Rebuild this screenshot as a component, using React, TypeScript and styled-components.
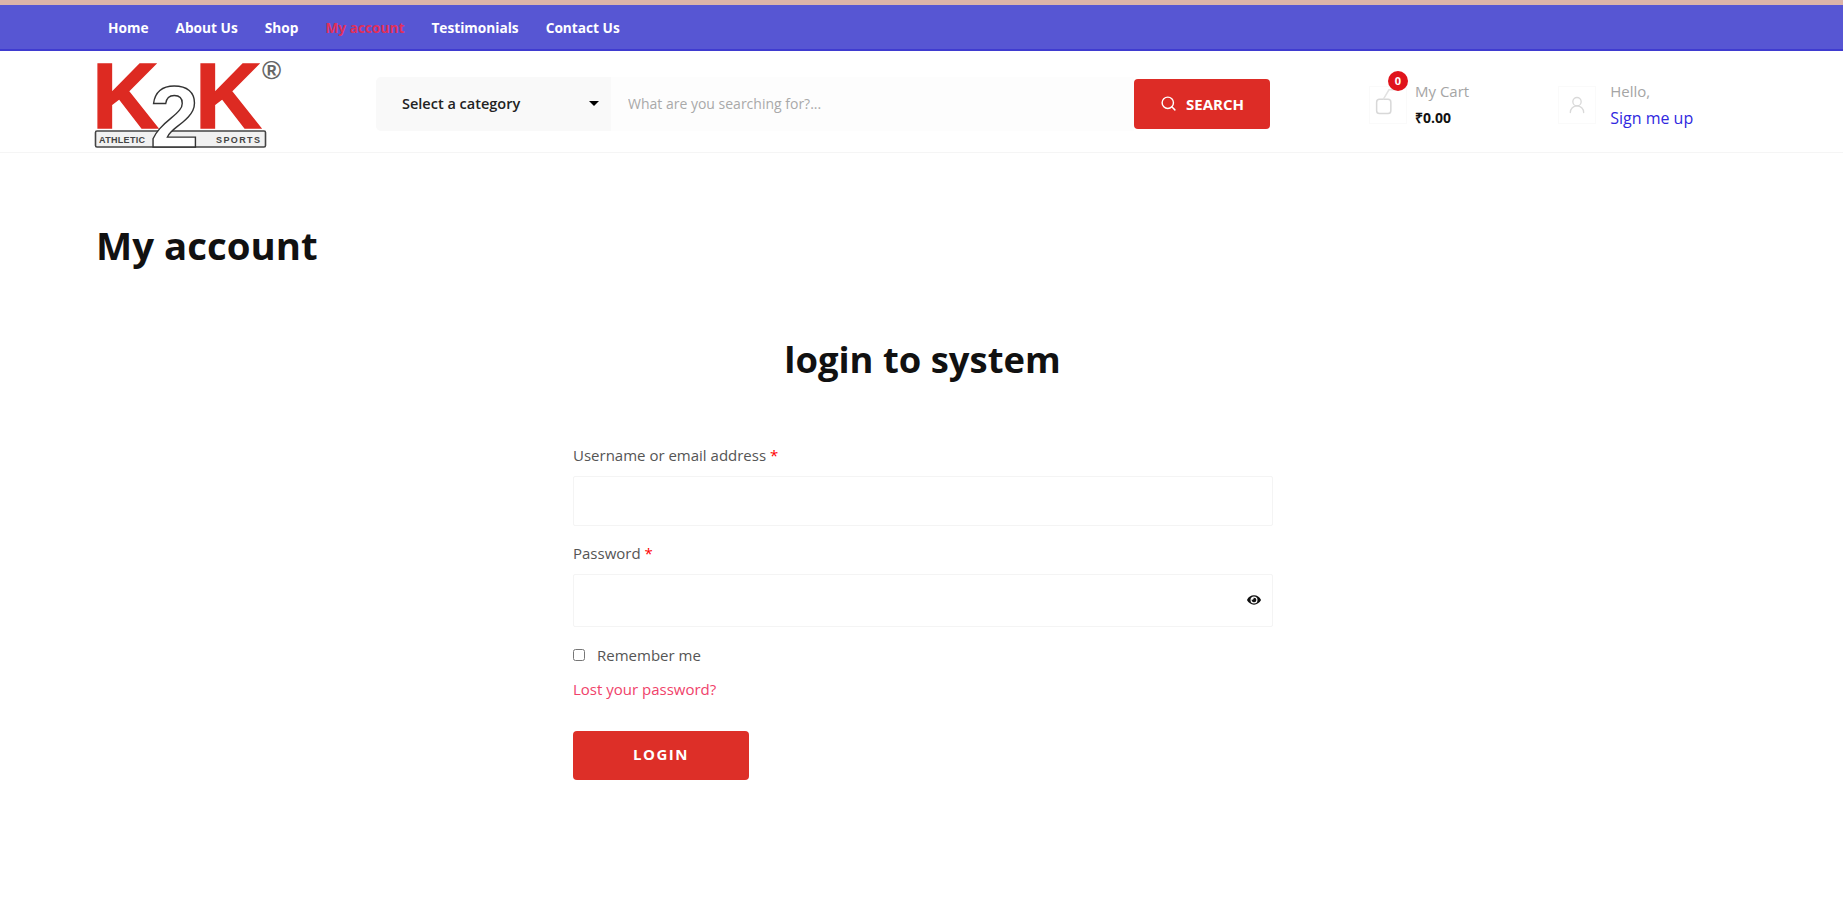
import React from "react";
import styled, { createGlobalStyle } from "styled-components";
import { Search, UserRound } from "lucide-react";
import { FaEye } from "react-icons/fa";

const Global = createGlobalStyle`
  html, body { margin: 0; padding: 0; background: #fff; }
  body { font-family: "Open Sans", "Liberation Sans", sans-serif; color: #111; }
  * { box-sizing: border-box; }
`;

const Page = styled.div`
  width: 1843px;
  height: 900px;
  overflow: hidden;
  display: flex;
  flex-direction: column;
`;
const Stripe = styled.div`
  height: 5px;
  background: #dcb4a9;
`;
const TopNav = styled.nav`
  height: 46px;
  background: #5756d3;
  border-bottom: 2px solid #3f3bd0;
  display: flex;
  align-items: center;
  gap: 27px;
  padding-left: 108px;
`;
const NavLink = styled.a<{ $active?: boolean }>`
  font-size: 13.7px;
  font-weight: 700;
  color: ${(p) => (p.$active ? "#e0305a" : "#fff")};
  white-space: nowrap;
`;
const Header = styled.header`
  height: 102px;
  border-bottom: 1px solid #f5f5f5;
  display: flex;
  align-items: center;
  padding-left: 90px;
`;
const LogoSvg = styled.svg`
  width: 200px;
  height: 98px;
  flex: none;
  margin-top: 4px;
  overflow: visible;
`;
const SearchBar = styled.div`
  margin: 4px 0 0 86px;
  width: 894px;
  height: 54px;
  display: flex;
  align-items: center;
`;
const Category = styled.div`
  width: 235px;
  height: 54px;
  background: #f9f9f9;
  border-radius: 5px 0 0 5px;
  display: flex;
  align-items: center;
  justify-content: space-between;
  padding: 0 12px 0 26px;
  font-size: 14.5px;
  font-weight: 600;
  color: #222;
`;
const Caret = styled.span`
  width: 0;
  height: 0;
  border-left: 5px solid transparent;
  border-right: 5px solid transparent;
  border-top: 5px solid #000;
`;
const SearchInput = styled.input`
  flex: 1;
  min-width: 0;
  height: 54px;
  border: 0;
  outline: 0;
  background: #fdfdfd;
  padding: 0 17px;
  font: 400 14px "Open Sans", sans-serif;
  &::placeholder { color: #a9a9a9; }
`;
const SearchButton = styled.button`
  width: 136px;
  height: 50px;
  border: 0;
  border-radius: 4px;
  background: #dd2c26;
  color: #fff;
  display: flex;
  align-items: center;
  justify-content: center;
  gap: 9px;
  font: 700 15px "Open Sans", sans-serif;
  padding: 0;
`;
const HeaderBlock = styled.div<{ $left: number }>`
  margin: 6px 0 0 ${(p) => p.$left}px;
  display: flex;
  align-items: center;
  flex: none;
`;
const IconBox = styled.div`
  position: relative;
  width: 38px;
  height: 38px;
  border: 1px solid #fafafa;
  display: flex;
  align-items: center;
  justify-content: center;
  color: #d9d9d9;
`;
const Badge = styled.span`
  position: absolute;
  top: -16px;
  left: 18px;
  width: 20px;
  height: 20px;
  border-radius: 50%;
  background: #e0141c;
  color: #fff;
  font-size: 11px;
  font-weight: 700;
  display: flex;
  align-items: center;
  justify-content: center;
`;
const InfoText = styled.div<{ $gap: number }>`
  display: flex;
  flex-direction: column;
  gap: 8px;
  margin: -2px 0 0 ${(p) => p.$gap}px;
`;
const InfoLabel = styled.span`
  color: #a5a5a5;
  font-size: 15px;
  line-height: 20px;
`;
const InfoValue = styled.span`
  color: #111;
  font-weight: 700;
  font-size: 14px;
  line-height: 18px;
`;
const InfoLink = styled.a`
  color: #3028e0;
  font-size: 16px;
  line-height: 18px;
`;
const Main = styled.main`
  display: flex;
  flex-direction: column;
`;
const PageTitle = styled.h1`
  margin: 67px 0 0 96px;
  font-size: 38.4px;
  line-height: 50px;
  font-weight: 700;
  color: #111;
`;
const LoginTitle = styled.h2`
  margin: 67px 0 0;
  text-align: center;
  font-size: 36.4px;
  line-height: 44px;
  font-weight: 700;
  color: #111;
  width: 1845px;
`;
const Form = styled.form`
  margin: 64px 0 0 573px;
  width: 700px;
  display: flex;
  flex-direction: column;
`;
const Label = styled.label`
  font-size: 15px;
  line-height: 20px;
  color: #555;
`;
const Req = styled.span`
  color: #f00;
`;
const FieldWrap = styled.div<{ $h: number }>`
  position: relative;
  height: ${(p) => p.$h}px;
  margin: 11px 0 17px;
`;
const Field = styled.input`
  width: 100%;
  height: 100%;
  border: 1px solid #f4f4f4;
  outline: 0;
  background: #fff;
  border-radius: 2px;
`;
const EyeIcon = styled(FaEye)`
  position: absolute;
  top: 19px;
  right: 12px;
  width: 14px;
  height: 14px;
  color: #111;
`;
const RememberRow = styled.label`
  display: flex;
  align-items: center;
  gap: 12px;
  margin-top: 1px;
  font-size: 15px;
  line-height: 20px;
  color: #555;
`;
const Check = styled.input`
  width: 12px;
  height: 12px;
  margin: 0;
`;
const LostLink = styled.a`
  margin-top: 14px;
  font-size: 15px;
  line-height: 20px;
  color: #f0426a;
`;
const LoginButton = styled.button`
  margin-top: 32px;
  width: 176px;
  height: 49px;
  border: 0;
  border-radius: 4px;
  background: #dd2f28;
  color: #fff;
  font: 700 15px "Open Sans", sans-serif;
  letter-spacing: 1.5px;
  padding: 0 0 4px;
`;

const Logo = () => (
  <LogoSvg viewBox="0 0 200 98" role="img" aria-label="K2K">
    <text x="2" y="73" fontFamily="Liberation Sans" fontWeight="700" fontSize="92" fill="#dd2a22" stroke="#dd2a22" strokeWidth="1.5">K</text>
    <text x="105" y="73" fontFamily="Liberation Sans" fontWeight="700" fontSize="92" fill="#dd2a22" stroke="#dd2a22" strokeWidth="1.5">K</text>
    <rect x="5.5" y="76" width="170" height="16" rx="1.5" fill="#f1f1f1" stroke="#444" strokeWidth="1.6" />
    <text x="9" y="88" fontFamily="Liberation Sans" fontSize="9" fontWeight="700" fill="#444" textLength="46">ATHLETIC</text>
    <text x="126" y="88" fontFamily="Liberation Sans" fontSize="9" fontWeight="700" fill="#444" textLength="44">SPORTS</text>
    <text x="60" y="92" fontFamily="Liberation Sans" fontWeight="700" fontSize="88" fill="#fff" stroke="#333" strokeWidth="1.4">2</text>
    <text x="172" y="24" fontFamily="Liberation Sans" fontSize="26" fontWeight="700" fill="#666">®</text>
  </LogoSvg>
);

const BagIcon = () => (
  <svg width="38" height="38" viewBox="0 0 38 38" fill="none" stroke="#d8d8d8" strokeWidth="1.6">
    <rect x="7" y="13" width="15" height="15" rx="3" />
    <path d="M14 13 L20 3 L25 3" stroke="#e2e2e2" />
  </svg>
);

export default function App() {
  return (
    <Page>
      <Global />
      <Stripe />
      <TopNav>
        <NavLink>Home</NavLink>
        <NavLink>About Us</NavLink>
        <NavLink>Shop</NavLink>
        <NavLink $active>My account</NavLink>
        <NavLink>Testimonials</NavLink>
        <NavLink>Contact Us</NavLink>
      </TopNav>
      <Header>
        <Logo />
        <SearchBar>
          <Category>
            Select a category
            <Caret />
          </Category>
          <SearchInput placeholder="What are you searching for?..." />
          <SearchButton>
            <Search size={17} strokeWidth={2} />
            SEARCH
          </SearchButton>
        </SearchBar>
        <HeaderBlock $left={99}>
          <IconBox>
            <BagIcon />
            <Badge>0</Badge>
          </IconBox>
          <InfoText $gap={8}>
            <InfoLabel>My Cart</InfoLabel>
            <InfoValue>₹0.00</InfoValue>
          </InfoText>
        </HeaderBlock>
        <HeaderBlock $left={89}>
          <IconBox>
            <UserRound size={20} strokeWidth={1.6} />
          </IconBox>
          <InfoText $gap={14}>
            <InfoLabel>Hello,</InfoLabel>
            <InfoLink>Sign me up</InfoLink>
          </InfoText>
        </HeaderBlock>
      </Header>
      <Main>
        <PageTitle>My account</PageTitle>
        <LoginTitle>login to system</LoginTitle>
        <Form>
          <Label>
            Username or email address <Req>*</Req>
          </Label>
          <FieldWrap $h={50}>
            <Field type="text" />
          </FieldWrap>
          <Label>
            Password <Req>*</Req>
          </Label>
          <FieldWrap $h={53}>
            <Field type="password" />
            <EyeIcon />
          </FieldWrap>
          <RememberRow>
            <Check type="checkbox" />
            Remember me
          </RememberRow>
          <LostLink>Lost your password?</LostLink>
          <LoginButton type="button">LOGIN</LoginButton>
        </Form>
      </Main>
    </Page>
  );
}
